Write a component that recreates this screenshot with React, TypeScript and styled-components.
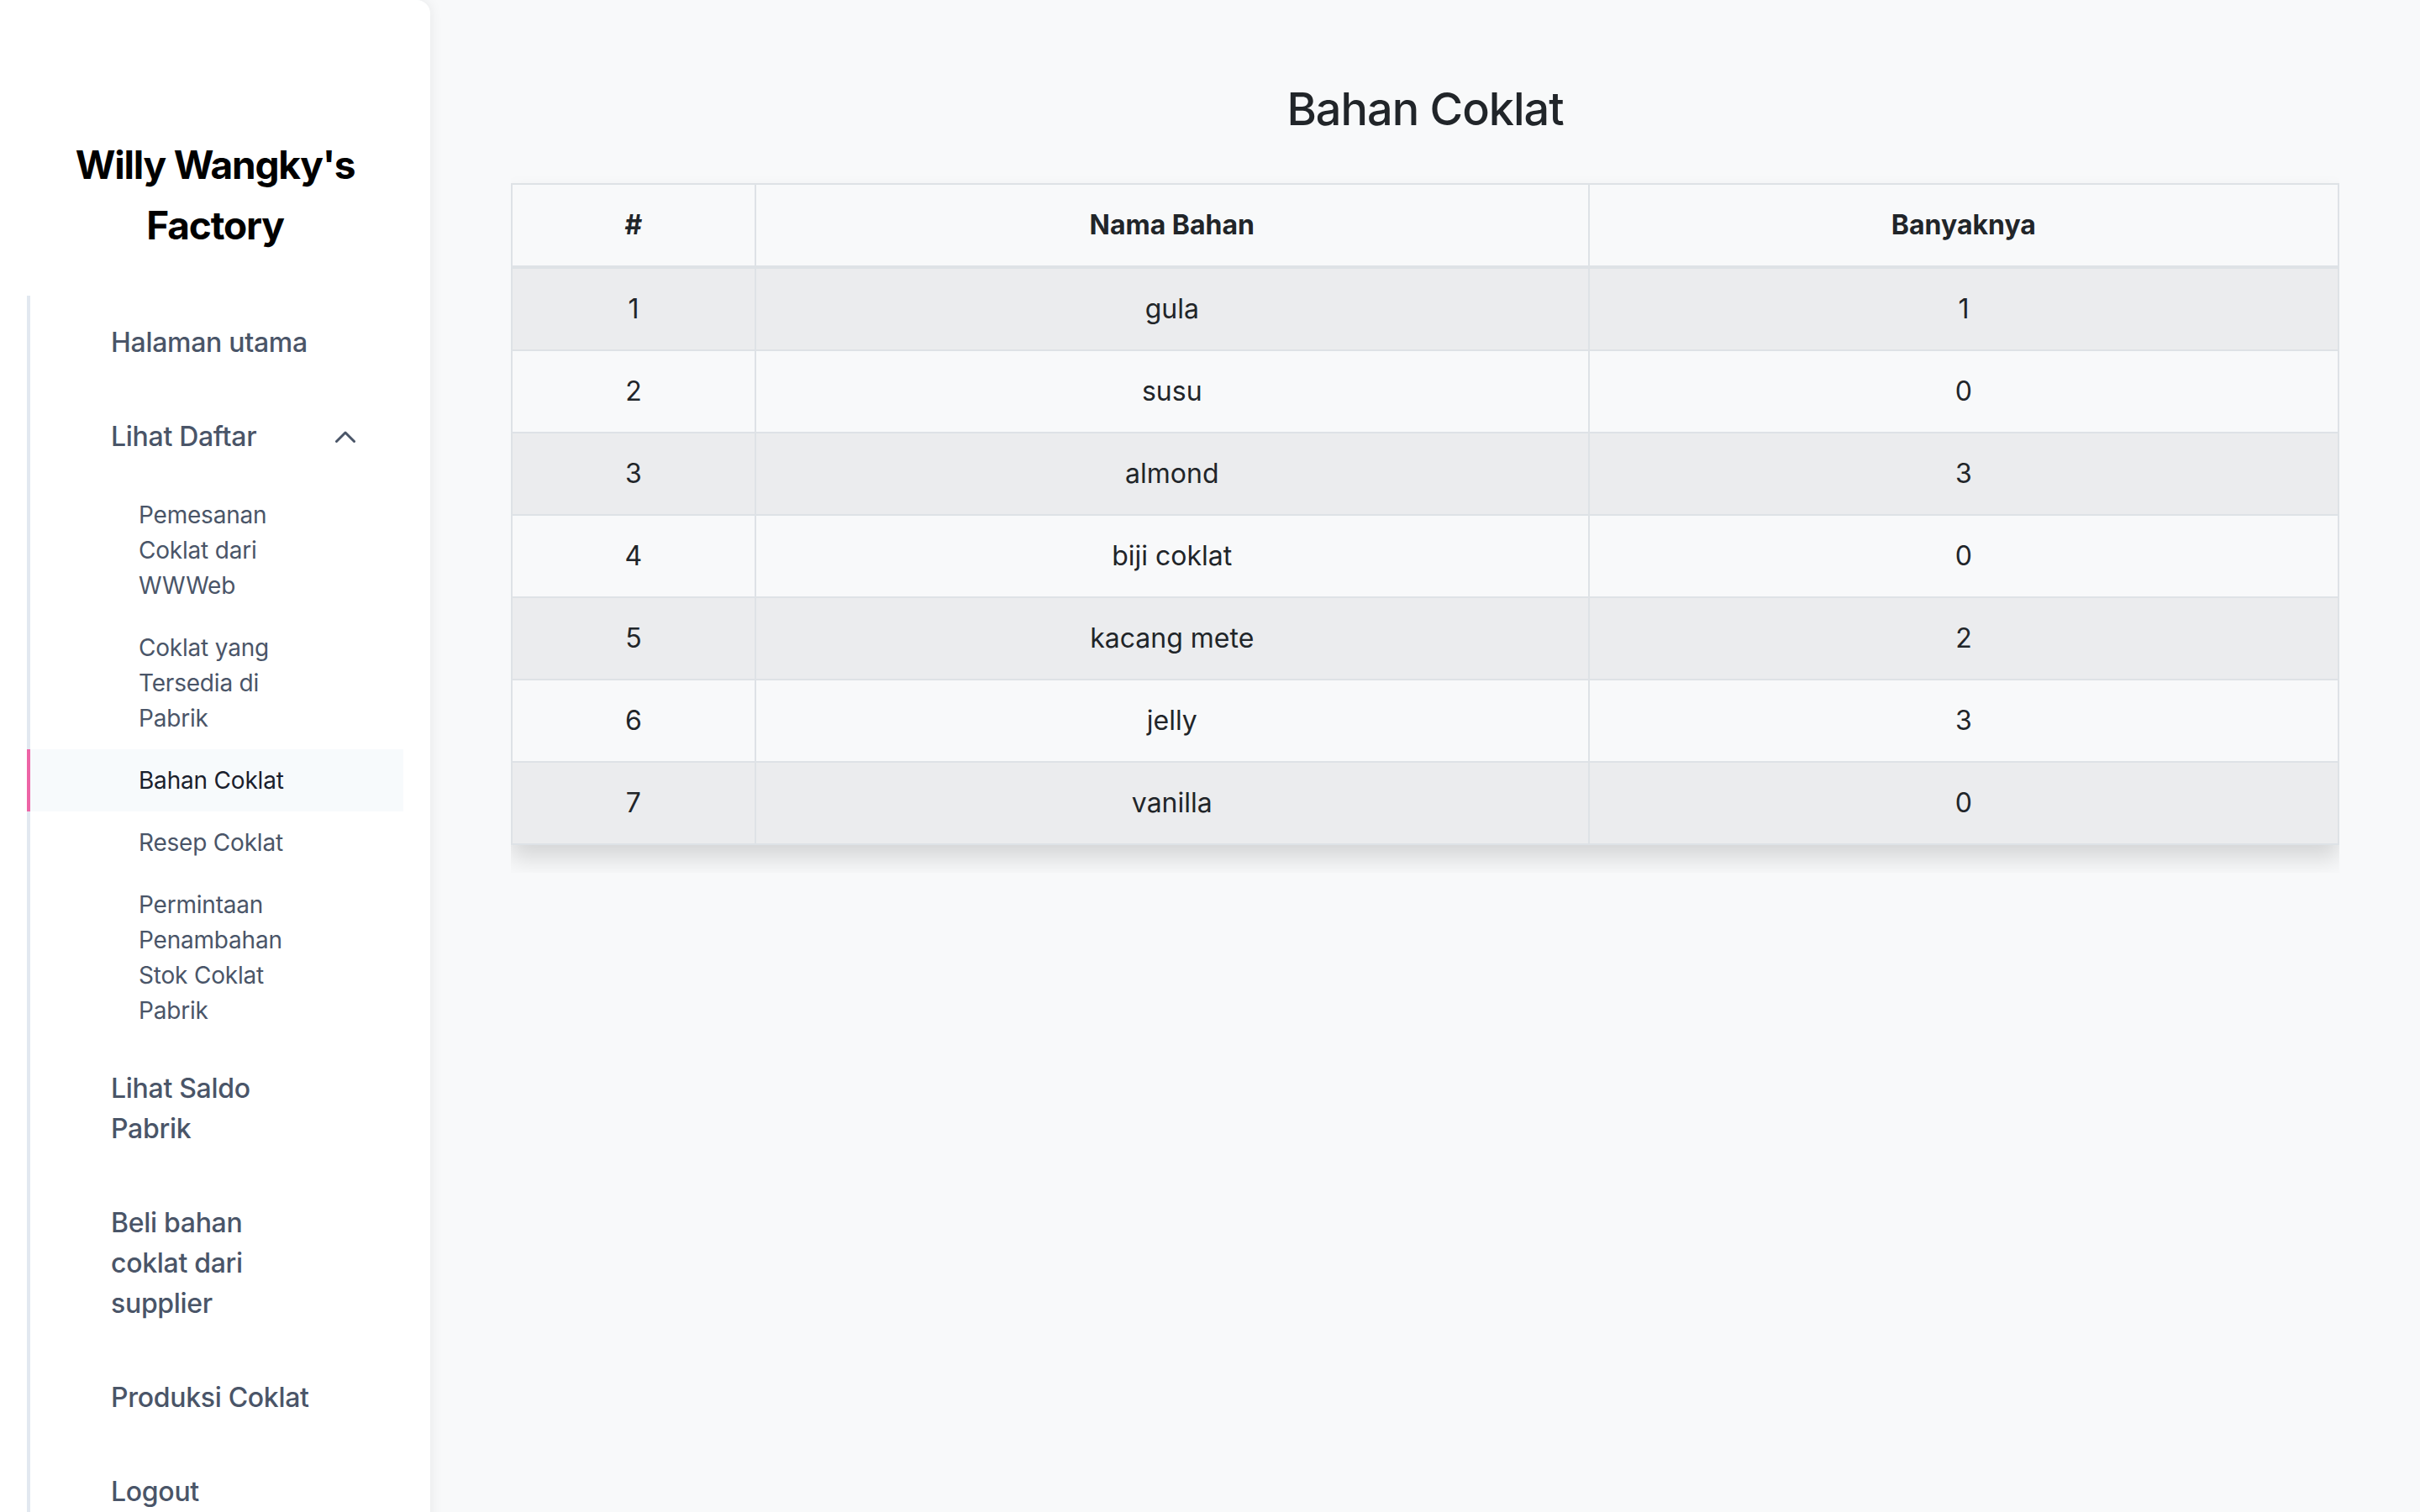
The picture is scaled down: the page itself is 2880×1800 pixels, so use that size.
import React from 'react';
import styled, { createGlobalStyle } from 'styled-components';

const GlobalStyle = createGlobalStyle`
  html, body { margin: 0; padding: 0; }
  body {
    font-family: Inter, "Noto Sans", "Liberation Sans", sans-serif;
    background: #f8f9fa;
    color: #212529;
  }
  * { box-sizing: border-box; }
`;

const Layout = styled.div`
  display: flex;
  min-height: 100vh;
  align-items: stretch;
`;

const Sidebar = styled.aside`
  width: 512px;
  flex-shrink: 0;
  background: #ffffff;
  border-radius: 0 16px 16px 0;
  box-shadow: 0 0 16px rgba(0, 0, 0, 0.08);
  padding: 160px 32px 48px;
  position: relative;
  z-index: 1;
`;

const Brand = styled.h1`
  margin: 0 0 48px;
  font-size: 46px;
  line-height: 72px;
  letter-spacing: -1.2px;
  font-weight: 700;
  color: #000000;
  text-align: center;
`;

const Nav = styled.nav`
  display: flex;
  flex-direction: column;
  border-left: 4px solid #e2e8f0;
`;

const NavItem = styled.a`
  display: flex;
  align-items: center;
  justify-content: space-between;
  padding: 32px 57px 32px 96px;
  font-size: 32px;
  line-height: 48px;
  letter-spacing: -0.3px;
  font-weight: 500;
  color: #4a5568;
  text-decoration: none;
  cursor: pointer;
`;

const NavLabel = styled.span`
  max-width: 250px;
`;

const SubList = styled.div`
  display: flex;
  flex-direction: column;
  margin-left: -4px;
`;

const SubItem = styled.a<{ $active?: boolean }>`
  display: block;
  padding: 16px 24px 16px 129px;
  border-left: 4px solid ${(p) => (p.$active ? '#ed64a6' : 'transparent')};
  background: ${(p) => (p.$active ? '#f7fafc' : 'transparent')};
  font-size: 28px;
  line-height: 42px;
  letter-spacing: -0.2px;
  font-weight: 400;
  color: ${(p) => (p.$active ? '#1a202c' : '#4a5568')};
  text-decoration: none;
  cursor: pointer;
`;

const SubLabel = styled.span`
  display: block;
  max-width: 200px;
`;

const Main = styled.main`
  flex: 1;
  min-width: 0;
  padding: 96px 96px 64px;
  display: flex;
  flex-direction: column;
`;

const Title = styled.h3`
  margin: 0 0 36px;
  text-align: center;
  font-size: 54px;
  line-height: 68px;
  letter-spacing: -1px;
  font-weight: 500;
  color: #212529;
`;

const TableClip = styled.div`
  overflow: hidden;
  padding: 18px 0 33px;
`;

const Table = styled.table`
  width: 100%;
  border-collapse: collapse;
  table-layout: fixed;
  box-shadow: 0 16px 26px rgba(0, 0, 0, 0.14);
  font-size: 32px;
  line-height: 48px;
  color: #212529;
`;

const HeadRow = styled.tr`
  background: #f8f9fa;
`;

const Row = styled.tr<{ $striped: boolean }>`
  background: ${(p) => (p.$striped ? '#ebecee' : '#f8f9fa')};
`;

const Th = styled.th`
  padding: 24px;
  border: 2px solid #dee2e6;
  border-bottom-width: 4px;
  font-weight: 700;
  text-align: center;
  vertical-align: bottom;
`;

const Td = styled.td`
  padding: 24px;
  border: 2px solid #dee2e6;
  font-weight: 400;
  text-align: center;
  vertical-align: top;
`;

const Chevron = () => (
  <svg width="24" height="14" viewBox="0 0 24 14" fill="none">
    <path d="M1.5 12.5 L12 2 L22.5 12.5" stroke="#4a5568" strokeWidth="3" strokeLinecap="round" strokeLinejoin="round" />
  </svg>
);

const rows: [number, string, number][] = [
  [1, 'gula', 1],
  [2, 'susu', 0],
  [3, 'almond', 3],
  [4, 'biji coklat', 0],
  [5, 'kacang mete', 2],
  [6, 'jelly', 3],
  [7, 'vanilla', 0],
];

const subItems = [
  'Pemesanan Coklat dari WWWeb',
  'Coklat yang Tersedia di Pabrik',
  'Bahan Coklat',
  'Resep Coklat',
  'Permintaan Penambahan Stok Coklat Pabrik',
];

export default function App() {
  return (
    <>
      <GlobalStyle />
      <Layout>
        <Sidebar>
          <Brand>
            Willy Wangky's
            <br />
            Factory
          </Brand>
          <Nav>
            <NavItem>
              <NavLabel>Halaman utama</NavLabel>
            </NavItem>
            <NavItem>
              <NavLabel>Lihat Daftar</NavLabel>
              <Chevron />
            </NavItem>
            <SubList>
              {subItems.map((s) => (
                <SubItem key={s} $active={s === 'Bahan Coklat'}>
                  <SubLabel>{s}</SubLabel>
                </SubItem>
              ))}
            </SubList>
            <NavItem>
              <NavLabel>Lihat Saldo Pabrik</NavLabel>
            </NavItem>
            <NavItem>
              <NavLabel>Beli bahan coklat dari supplier</NavLabel>
            </NavItem>
            <NavItem>
              <NavLabel>Produksi Coklat</NavLabel>
            </NavItem>
            <NavItem>
              <NavLabel>Logout</NavLabel>
            </NavItem>
          </Nav>
        </Sidebar>
        <Main>
          <Title>Bahan Coklat</Title>
          <TableClip>
            <Table>
              <colgroup>
                <col style={{ width: '13.33%' }} />
                <col style={{ width: '45.63%' }} />
                <col style={{ width: '41.04%' }} />
              </colgroup>
              <thead>
                <HeadRow>
                  <Th>#</Th>
                  <Th>Nama Bahan</Th>
                  <Th>Banyaknya</Th>
                </HeadRow>
              </thead>
              <tbody>
                {rows.map(([n, name, qty], i) => (
                  <Row key={n} $striped={i % 2 === 0}>
                    <Td>{n}</Td>
                    <Td>{name}</Td>
                    <Td>{qty}</Td>
                  </Row>
                ))}
              </tbody>
            </Table>
          </TableClip>
        </Main>
      </Layout>
    </>
  );
}
